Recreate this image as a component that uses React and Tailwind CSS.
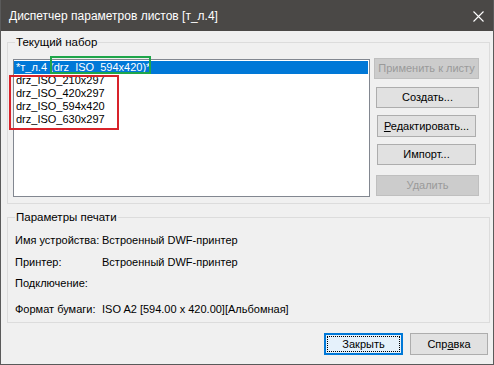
import React from "react";

const FONT = { fontFamily: '"Segoe UI", "Liberation Sans", Arial, sans-serif' };

function Btn({ children, disabled, className = "" }) {
  return (
    <div
      className={`flex items-center justify-center h-[21px] border whitespace-nowrap ${
        disabled ? "bg-[#cccccc] border-[#bfbfbf] text-[#9a9a9a]" : "bg-[#e1e1e1] border-[#adadad] text-black"
      } ${className}`}
    >
      {children}
    </div>
  );
}

function Group({ title, className = "", children }) {
  return (
    <div className={`relative border border-[#dcdcdc] ${className}`}>
      <span className="absolute left-[7px] -top-[9px] px-[1px] bg-[#f0f0f0] leading-[16px] text-[11.5px]">{title}</span>
      {children}
    </div>
  );
}

const items = ["drz_ISO_210x297", "drz_ISO_420x297", "drz_ISO_594x420", "drz_ISO_630x297"];

const params = [
  ["Имя устройства:", "Встроенный DWF-принтер", "h-[22px]"],
  ["Принтер:", "Встроенный DWF-принтер", "h-[21px]"],
  ["Подключение:", "", "h-[26px]"],
  ["Формат бумаги:", "ISO A2 [594.00 x 420.00][Альбомная]", "h-[20px]"],
];

export default function App() {
  return (
    <div
      className="w-[494px] h-[365px] bg-[#f0f0f0] border-x border-b border-[#5a5a5a] flex flex-col text-[11px] text-black overflow-hidden"
      style={FONT}
    >
      {/* title bar */}
      <div className="h-[31px] bg-[#4a4846] flex items-center justify-between pl-[8px] pr-[9px] text-white text-[12px]">
        <span>Диспетчер параметров листов [т_л.4]</span>
        <svg width="11" height="11" viewBox="0 0 11 11" className="mt-[1px]">
          <path d="M0.5 0.5 L10.5 10.5 M10.5 0.5 L0.5 10.5" stroke="#ffffff" strokeWidth="1.1" />
        </svg>
      </div>

      <div className="pl-[6px] flex flex-col">
        <Group title="Текущий набор" className="mt-[11px] w-[483px] h-[162px]">
          <div className="flex pt-[16px] pl-[5px]">
            {/* list box */}
            <div className="relative w-[357px] h-[138px] bg-white border border-[#828790] pt-[1px]">
              <div className="h-[13px] mr-[1px] bg-[#0078d7] text-white leading-[13px] pl-[2px] whitespace-nowrap overflow-hidden">
                *т_л.4 (drz_ISO_594x420)*
              </div>
              {items.map((it) => (
                <div key={it} className="h-[13px] leading-[13px] pl-[2px] whitespace-nowrap">
                  {it}
                </div>
              ))}
              {/* annotation frames */}
              <div className="absolute left-[36px] -top-[4px] w-[101px] h-[18px] border-2 border-[#1fa64a]" />
              <div className="absolute -left-[5px] top-[15px] w-[110px] h-[55px] border-2 border-[#d8232a]" />
            </div>

            {/* buttons */}
            <div className="flex flex-col items-start ml-[4px] -mt-[1px]">
              <Btn disabled className="w-[105px]">Применить к листу</Btn>
              <Btn className="w-[103px] ml-[2px] mt-[8px]">Создать...</Btn>
              <Btn className="w-[99px] h-[22px] ml-[3px] mt-[7px]">
                <span>
                  <span className="underline">Р</span>едактировать...
                </span>
              </Btn>
              <Btn className="w-[99px] ml-[3px] mt-[7px]">Импорт...</Btn>
              <Btn disabled className="w-[103px] ml-[2px] mt-[10px]">Удалить</Btn>
            </div>
          </div>
        </Group>

        <Group title="Параметры печати" className="mt-[13px] w-[483px] h-[106px]">
          <div className="flex flex-col pt-[15px] pl-[7px]">
            {params.map(([k, v, h]) => (
              <div key={k} className={`flex items-start leading-[14px] ${h}`}>
                <span className="w-[87px] whitespace-nowrap">{k}</span>
                <span className="whitespace-nowrap">{v}</span>
              </div>
            ))}
          </div>
        </Group>

        <div className="flex justify-end gap-[7px] mt-[10px] pr-[5px]">
          <div className="w-[79px] h-[22px] border-2 border-[#0078d7] bg-[#e5f1fb] p-[1px]">
            <div className="w-full h-full border border-dotted border-black flex items-center justify-center">
              Закрыть
            </div>
          </div>
          <Btn className="w-[78px] h-[22px]">
            <span>
              Спр<span className="underline">а</span>вка
            </span>
          </Btn>
        </div>
      </div>
    </div>
  );
}
